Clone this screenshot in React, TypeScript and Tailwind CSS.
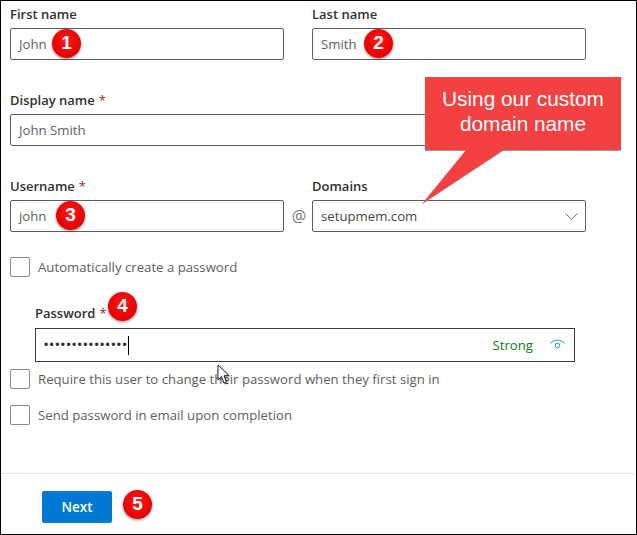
import React from "react";

const font = "font-['Open_Sans','Noto_Sans',sans-serif]";

const Badge = ({ n, pos }: { n: number; pos: string }) => (
  <div
    className={`absolute ${pos} flex h-[29px] w-[29px] items-center justify-center rounded-full bg-[radial-gradient(circle_at_50%_40%,#ff1a1a,#e60000_70%,#d00000)] font-['Liberation_Sans',sans-serif] text-[19px] font-bold text-white shadow-[0_1px_3px_rgba(0,0,0,0.45)]`}
  >
    {n}
  </div>
);

const Label = ({ text, required }: { text: string; required?: boolean }) => (
  <div className="mb-[2px] flex h-[22px] items-center text-[13px] font-semibold text-[#323130]">
    {text}
    {required && <span className="ml-[4px] font-normal text-[#a4262c]">*</span>}
  </div>
);

const Field = ({ label, value, required }: { label: string; value: string; required?: boolean }) => (
  <div className="w-[274px]">
    <Label text={label} required={required} />
    <div className="flex h-[32px] items-center rounded-[2px] border border-[#605e5c] px-[8px] pt-[1px] text-[13.2px] text-[#605e5c]">
      {value}
    </div>
  </div>
);

const Check = ({ text, className }: { text: string; className: string }) => (
  <div className={`flex h-[20px] items-center gap-[8px] ${className}`}>
    <div className="h-[20px] w-[20px] rounded-[2px] border border-[#8a8886]" />
    <span className="text-[13.2px] leading-[20px] text-[#605e5c]">{text}</span>
  </div>
);

export default function App() {
  return (
    <div className={`relative flex h-[535px] w-[637px] flex-col border border-black bg-white ${font}`}>
      <div className="flex-1 pl-[9px] pt-[3px]">
        <div className="flex gap-[28px]">
          <Field label="First name" value="John" />
          <Field label="Last name" value="Smith" />
        </div>

        <div className="mt-[30px] w-[576px]">
          <Label text="Display name" required />
          <div className="flex h-[32px] items-center rounded-[2px] border border-[#605e5c] px-[8px] pt-[1px] text-[13.2px] text-[#605e5c]">
            John Smith
          </div>
        </div>

        <div className="mt-[30px] flex">
          <Field label="Username" value="john" required />
          <div className="flex w-[28px] items-end justify-center pb-[4px] pl-[2px] text-[16px] text-[#7a7876]">@</div>
          <div className="w-[274px]">
            <Label text="Domains" />
            <div className="flex h-[32px] items-center justify-between rounded-[2px] border border-[#605e5c] pl-[8px] pr-[7px] pt-[1px] text-[13.2px] text-[#484644]">
              setupmem.com
              <svg width="13" height="7" viewBox="0 0 13 7" fill="none" stroke="#605e5c" strokeWidth="0.9">
                <path d="M0.5 0.5 L6.5 6.2 L12.5 0.5" />
              </svg>
            </div>
          </div>
        </div>

        <Check text="Automatically create a password" className="mt-[25px]" />

        <div className="ml-[25px] mt-[26px] w-[540px]">
          <div className="mb-[5px] flex h-[20px] items-center pt-[2px] text-[13px] font-semibold text-[#323130]">
            Password
            <span className="ml-[4px] font-normal text-[#a4262c]">*</span>
          </div>
          <div className="flex h-[34px] items-center border-[1.5px] border-[#3b3a39] pl-[8px] pr-[9px]">
            <span className="font-['Liberation_Sans',sans-serif] text-[12px] leading-none tracking-[1.4px] text-[#323130]">
              •••••••••••••••
            </span>
            <span className="h-[19px] w-[1px] bg-black" />
            <span className="ml-auto pt-[1px] text-[13.2px] text-[#107c10]">Strong</span>
            <svg className="ml-[17px]" width="15" height="14" viewBox="0 0 15 14" fill="none" stroke="#2b88d8" strokeWidth="1">
              <path d="M0.5 5.5 C3.5 1 11.5 1 14.5 5.5" />
              <circle cx="7.5" cy="7.5" r="2.3" />
            </svg>
          </div>
        </div>

        <Check text="Require this user to change their password when they first sign in" className="mt-[7px]" />
        <Check text="Send password in email upon completion" className="mt-[16px]" />
      </div>

      <div className="h-[61px] border-t border-[#e5e5e5] pl-[41px] pt-[17px]">
        <button className="h-[32px] w-[70px] rounded-[2px] bg-[#0078d4] text-[13.5px] font-semibold text-white">Next</button>
      </div>

      {/* annotations laid over the form */}
      <Badge n={1} pos="left-[51px] top-[28px]" />
      <Badge n={2} pos="left-[363px] top-[28px]" />
      <Badge n={3} pos="left-[55px] top-[200px]" />
      <Badge n={4} pos="left-[107px] top-[291px]" />
      <Badge n={5} pos="left-[122px] top-[489px]" />

      <div className="absolute left-[424px] top-[76px] flex h-[73px] w-[196px] items-center justify-center bg-[#f34040] pb-[5px] text-center font-['Liberation_Sans',sans-serif] text-[20.8px] leading-[25px] text-white shadow-[0_1px_0_#999]">
        Using our custom
        <br />
        domain name
      </div>
      <svg className="absolute left-[420px] top-[148px]" width="90" height="58" viewBox="0 0 90 58">
        <path d="M45 1 L83 1 L1 55 Z" fill="#f34040" />
        <path d="M83 1 L1 55" stroke="#999" strokeWidth="0.6" fill="none" />
      </svg>

      <svg className="absolute left-[216px] top-[363px] drop-shadow-[1px_1px_1px_rgba(0,0,0,0.35)]" width="16" height="22" viewBox="0 0 16 22">
        <path d="M1 1 L1 16 L4.5 12.5 L7 19 L9.5 18 L7 11.8 L12 11.5 Z" fill="#fff" stroke="#222" strokeWidth="1" />
      </svg>
    </div>
  );
}
